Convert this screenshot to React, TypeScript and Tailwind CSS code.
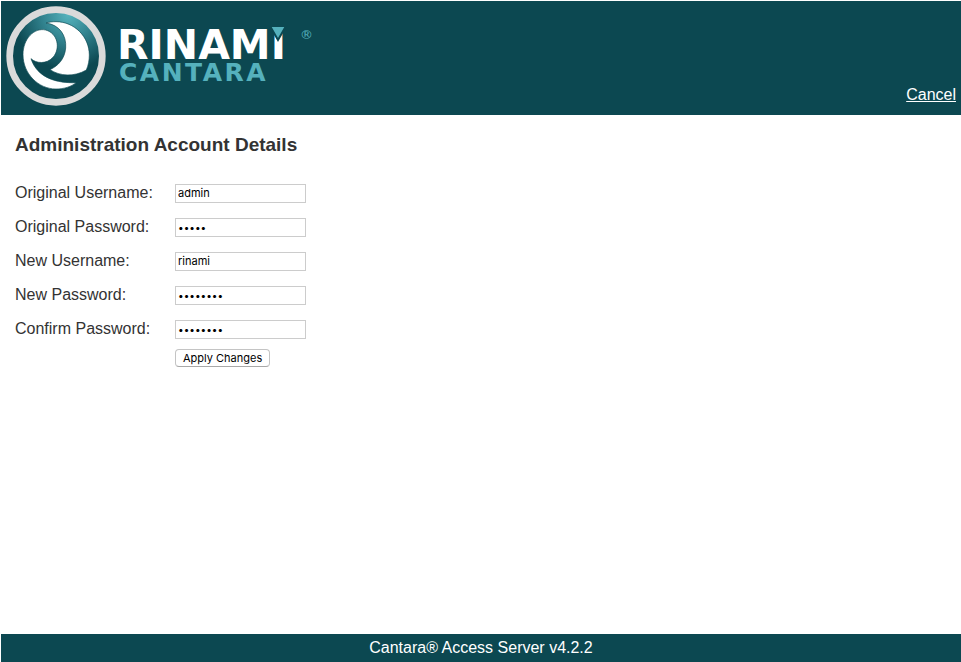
import React, { useState } from 'react';

interface Field {
  id: string;
  label: string;
  type: 'text' | 'password';
  initial: string;
}

const fields: Field[] = [
  { id: 'originalUsername', label: 'Original Username:', type: 'text', initial: 'admin' },
  { id: 'originalPassword', label: 'Original Password:', type: 'password', initial: 'admin' },
  { id: 'newUsername', label: 'New Username:', type: 'text', initial: 'rinami' },
  { id: 'newPassword', label: 'New Password:', type: 'password', initial: 'password' },
  { id: 'confirmPassword', label: 'Confirm Password:', type: 'password', initial: 'password' },
];

function Emblem() {
  return (
    <svg viewBox="18 19 300 300" className="w-[100px] h-[100px] shrink-0" aria-hidden="true">
      <defs>
        <radialGradient id="wave" gradientUnits="userSpaceOnUse" cx="205" cy="45" r="165">
          <stop offset="0" stopColor="#56b3bd" />
          <stop offset="0.45" stopColor="#338591" />
          <stop offset="1" stopColor="#0c4851" />
        </radialGradient>
      </defs>
      <circle cx="168" cy="169" r="139" fill="url(#wave)" stroke="#dadada" strokeWidth="20" />
      <g fill="#fff" stroke="#0c4851" strokeWidth="2">
        <path d="M93 177 C109 192 140 194 159 173 C182 147 174 101 137 91 C102 83 69 118 69 165 C69 222 115 268 168 268 C192 268 214 261 228 249 C170 251 112 235 93 177Z" />
        <path d="M138 70 C178 75 200 107 197 145 C194 178 175 198 150 210 C178 229 222 233 259 211 C265 197 268 182 268 166 C268 111 223 66 168 66 C157 66 147 67 138 70Z" />
      </g>
    </svg>
  );
}

function Wordmark() {
  return (
    <svg viewBox="0 0 208 100" className="w-[208px] h-[100px] shrink-0 font-['DejaVu_Sans',sans-serif]">
      <text x="6" y="53" fill="#fff" className="text-[41px] font-bold">RINAMI</text>
      <text x="8" y="75" fill="#55b1bd" className="text-[25px] font-bold tracking-widest">CANTARA</text>
      <path d="M159 20 H175 L167 34Z" fill="#55b1bd" stroke="#0c4851" strokeWidth="2" />
      <text x="189" y="33" fill="#55b1bd" className="text-[13px]">®</text>
    </svg>
  );
}

export default function App() {
  const [values, setValues] = useState<Record<string, string>>(
    Object.fromEntries(fields.map((f) => [f.id, f.initial]))
  );

  return (
    <div className="min-h-screen flex flex-col bg-white pl-px pt-px font-['Liberation_Sans',Arial,sans-serif] text-base text-[#333]">
      <header className="bg-[#0c4851] flex items-end justify-between pl-[5px] pr-[5px] pt-[5px] pb-[9px]">
        <div className="flex items-center gap-[5px]">
          <Emblem />
          <Wordmark />
        </div>
        <a href="#" className="text-white underline leading-[22px]">Cancel</a>
      </header>

      <main className="flex-1 px-[14px] pt-[18px]">
        <h1 className="text-[19px] leading-6 font-bold mb-[19px]">Administration Account Details</h1>

        <form onSubmit={(e) => e.preventDefault()}>
          {fields.map((field) => (
            <div key={field.id} className="flex items-center h-[34px]">
              <label htmlFor={field.id} className="w-[160px]">{field.label}</label>
              <input
                id={field.id}
                type={field.type}
                value={values[field.id]}
                onChange={(e) => setValues({ ...values, [field.id]: e.target.value })}
                className={`w-[131px] h-[19px] border border-[#ccc] bg-white px-[2px] font-[Inter,sans-serif] text-black ${
                  field.type === 'password' ? 'text-[10px]' : 'text-[11px]'
                }`}
              />
            </div>
          ))}
          <button
            type="submit"
            className="mt-[3px] ml-[160px] h-[18px] px-[7px] flex items-center rounded border border-[#c4c4c4] border-b-[#a8a8a8] bg-white font-[Inter,sans-serif] text-[11px] text-black"
          >
            Apply Changes
          </button>
        </form>
      </main>

      <footer className="bg-[#0c4851] text-white text-center h-7 leading-7">
        Cantara® Access Server v4.2.2
      </footer>
    </div>
  );
}
